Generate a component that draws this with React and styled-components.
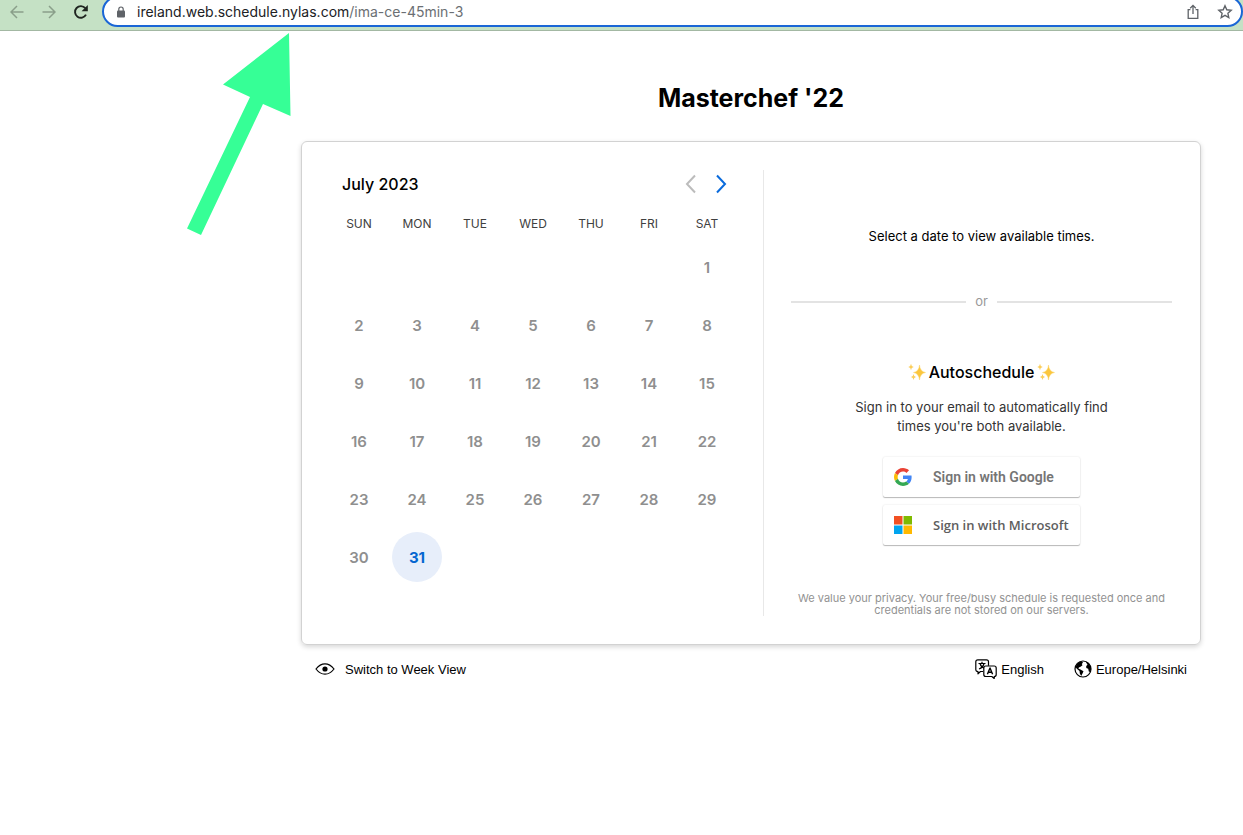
import React from "react";
import styled, { createGlobalStyle } from "styled-components";

const GlobalStyle = createGlobalStyle`
  *, *::before, *::after { box-sizing: border-box; }
  body { margin: 0; background: #fff; color: #000; font-family: Inter, "Liberation Sans", sans-serif; }
  button { border: 0; background: none; padding: 0; margin: 0; cursor: pointer; color: inherit; font: inherit; }
  svg { display: block; flex: none; }
`;

const Page = styled.div`
  position: relative;
  min-height: 100vh;
  overflow-x: hidden;
`;

const BrowserBar = styled.header`
  display: flex;
  align-items: flex-end;
  height: 31px;
  padding-bottom: 3px;
  overflow: hidden;
  background: #c5e1c5;
  border-bottom: 1px solid #a3b8a3;
`;

const NavGroup = styled.nav`
  display: flex;
  width: 102px;
  height: 30px;
  align-items: center;
  padding-left: 1px;
`;

const NavButton = styled.button`
  display: flex;
  width: 32px;
  height: 30px;
  align-items: center;
  justify-content: center;
  color: ${(p) => (p.$dim ? "#8a9f8a" : "#1f2420")};
`;

const AddressBar = styled.div`
  display: flex;
  flex: 1;
  align-items: center;
  height: 31px;
  padding: 0 8px 0 12px;
  background: #fff;
  border: 2px solid #1a66d6;
  border-radius: 16px;
  color: #5f6368;
`;

const Url = styled.div`
  flex: 1;
  margin-left: 11px;
  font-size: 14px;
  line-height: 20px;
  color: #6b6f73;
`;

const Host = styled.span`
  color: #202124;
`;

const BarIcons = styled.div`
  display: flex;
  gap: 16px;
`;

const IconButton = styled.button`
  display: flex;
  width: 16px;
  height: 16px;
  align-items: center;
  justify-content: center;
`;

const Pointer = styled.svg`
  position: absolute;
  left: 187px;
  top: 33px;
`;

const Main = styled.main`
  padding: 50px 42px 0 301px;
`;

const Title = styled.h1`
  margin: 0 0 26px;
  font-size: 25px;
  line-height: 34px;
  font-weight: 700;
  text-align: center;
`;

const Card = styled.section`
  display: flex;
  padding: 28px;
  border: 1px solid #d2d2d2;
  border-radius: 6px;
  box-shadow: 0 2px 5px rgba(0, 0, 0, 0.16);
`;

const CalendarPane = styled.div`
  width: 434px;
  padding-bottom: 30px;
  border-right: 1px solid #e8e8e8;
`;

const MonthBar = styled.div`
  display: flex;
  align-items: center;
  width: 406px;
  height: 28px;
  margin-bottom: 10px;
  padding-left: 12px;
`;

const Month = styled.h2`
  flex: 1;
  margin: 0;
  font-size: 16px;
  line-height: 28px;
  font-weight: 500;
`;

const MonthButton = styled.button`
  display: flex;
  width: 30px;
  height: 28px;
  align-items: center;
  justify-content: center;
  color: ${(p) => (p.disabled ? "#bcbcbc" : "#0a6bdc")};
`;

const Calendar = styled.table`
  width: 406px;
  table-layout: fixed;
  border-collapse: collapse;
  text-align: center;
`;

const Weekday = styled.th`
  height: 30px;
  padding: 0;
  font-size: 12px;
  font-weight: 400;
  color: #404040;
`;

const Cell = styled.td`
  height: 58px;
  padding: 0;
`;

const Day = styled.button`
  width: 50px;
  height: 50px;
  border-radius: 50%;
  font-size: 15px;
  font-weight: ${(p) => (p.$open ? 700 : 600)};
  background: ${(p) => (p.$open ? "#e7eefa" : "transparent")};
  color: ${(p) => (p.$open ? "#0566d0" : "#8f8f8f")};
`;

const TimesPane = styled.div`
  display: flex;
  flex: 1;
  flex-direction: column;
  align-items: center;
  padding: 56px 0 0 27px;
  text-align: center;
`;

const Prompt = styled.p`
  margin: 0 0 45px;
  font-size: 13px;
  line-height: 20px;
`;

const OrRule = styled.div`
  display: flex;
  align-self: stretch;
  align-items: center;
  gap: 9px;
  margin-bottom: 49px;
  font-size: 13px;
  line-height: 20px;
  color: #999;
  &::before, &::after {
    content: "";
    flex: 1;
    height: 2px;
    margin-top: 2px;
    background: #e3e3e3;
  }
`;

const AutoHeading = styled.h3`
  display: flex;
  align-items: center;
  gap: 3px;
  margin: 0 0 14px;
  font-size: 16px;
  line-height: 24px;
  font-weight: 500;
`;

const AutoText = styled.p`
  width: 280px;
  margin: 0 0 21px;
  font-size: 13px;
  line-height: 19px;
  color: #333;
`;

const SignInList = styled.div`
  display: flex;
  flex-direction: column;
  gap: 8px;
  margin-bottom: 40px;
`;

const SignIn = styled.button`
  display: flex;
  align-items: center;
  gap: 21px;
  width: 197px;
  height: 40px;
  padding-left: 11px;
  border-radius: 2px;
  box-shadow: 0 1px 1px rgba(0, 0, 0, 0.26), 0 0 2px rgba(0, 0, 0, 0.12);
  font-family: ${(p) => p.$face}, sans-serif;
  font-size: ${(p) => p.$size}px;
  font-weight: ${(p) => p.$weight};
  color: ${(p) => p.$ink};
`;

const Privacy = styled.p`
  margin: auto 0 0;
  font-size: 11px;
  line-height: 12px;
  color: #929292;
`;

const Footer = styled.footer`
  display: flex;
  align-items: center;
  gap: 30px;
  padding: 12px 14px;
`;

const FooterButton = styled.button`
  display: flex;
  align-items: center;
  gap: ${(p) => (p.$wide ? 10 : 4)}px;
  height: 24px;
  margin-right: ${(p) => (p.$wide ? "auto" : 0)};
  font-family: "Liberation Sans", Arial, sans-serif;
  font-size: 13px;
`;

const BackIcon = ({ flip }) => (
  <svg width="14" height="14" viewBox="0 0 14 14" fill="none" stroke="currentColor" strokeWidth="1.5">
    <path d={flip ? "M0.5 7H13M7 1l6 6-6 6" : "M13.5 7H1M7 1L1 7l6 6"} />
  </svg>
);

const ReloadIcon = () => (
  <svg width="16" height="16" viewBox="0 0 16 16">
    <path d="M13 10.6A5.8 5.8 0 1 1 12.3 4.2" fill="none" stroke="currentColor" strokeWidth="1.9" />
    <path d="M14.8 1v6.2H8.6z" fill="currentColor" />
  </svg>
);

const LockIcon = () => (
  <svg width="10" height="12" viewBox="0 0 10 12">
    <rect x="1" y="4.4" width="8" height="7" rx="1" fill="currentColor" />
    <path d="M2.8 5V3.2a2.2 2.2 0 0 1 4.4 0V5" fill="none" stroke="currentColor" strokeWidth="1.2" />
  </svg>
);

const ShareIcon = () => (
  <svg width="14" height="16" viewBox="0 0 14 16" fill="none" stroke="currentColor" strokeWidth="1.3">
    <path d="M4.4 5.6H2.2v8.8h9.6V5.6H9.6M7 10V1.6M4.2 4.2L7 1.4l2.8 2.8" />
  </svg>
);

const StarIcon = () => (
  <svg width="16" height="16" viewBox="0 0 16 16" fill="none" stroke="currentColor" strokeWidth="1.4">
    <path d="M8 1.8l1.8 4 4.4.5-3.3 3 .9 4.3L8 11.4l-3.8 2.2.9-4.3-3.3-3 4.4-.5z" />
  </svg>
);

const Chevron = ({ next }) => (
  <svg width="12" height="20" viewBox="0 0 12 20" fill="none" stroke="currentColor" strokeWidth="2">
    <path d={next ? "M2 1.5l8 8.5-8 8.5" : "M10 1.5L2 10l8 8.5"} />
  </svg>
);

const Sparkles = () => (
  <svg width="18" height="18" viewBox="0 0 18 18" aria-hidden="true">
    <path d="M11.5 2Q12 8.5 17.5 9.5 12 10.5 11.5 17 11 10.5 5.5 9.5 11 8.5 11.5 2z" fill="#fbc63d" stroke="#fbd56c" strokeWidth=".5" />
    <path d="M3 .8Q3.2 3.6 5.7 4 3.2 4.4 3 7.2 2.8 4.4.3 4 2.8 3.6 3 .8z" fill="#fbce5a" />
    <path d="M5.5 11Q5.7 13.5 8 14 5.7 14.5 5.5 17 5.3 14.5 3 14 5.3 13.5 5.5 11z" fill="#fbce5a" />
  </svg>
);

const GoogleLogo = () => (
  <svg width="18" height="18" viewBox="0 0 48 48">
    <path fill="#EA4335" d="M24 9.5c3.54 0 6.71 1.22 9.21 3.6l6.85-6.85C35.9 2.38 30.47 0 24 0 14.62 0 6.51 5.38 2.56 13.22l7.98 6.19C12.43 13.72 17.74 9.5 24 9.5z" />
    <path fill="#4285F4" d="M46.98 24.55c0-1.57-.15-3.09-.38-4.55H24v9.02h12.94c-.58 2.96-2.26 5.48-4.78 7.18l7.73 6c4.51-4.18 7.09-10.36 7.09-17.65z" />
    <path fill="#FBBC05" d="M10.53 28.59c-.48-1.45-.76-2.99-.76-4.59s.27-3.14.76-4.59l-7.98-6.19C.92 16.46 0 20.12 0 24c0 3.88.92 7.54 2.56 10.78l7.97-6.19z" />
    <path fill="#34A853" d="M24 48c6.48 0 11.93-2.13 15.89-5.81l-7.73-6c-2.15 1.45-4.92 2.3-8.16 2.3-6.26 0-11.57-4.22-13.47-9.91l-7.98 6.19C6.51 42.62 14.62 48 24 48z" />
  </svg>
);

const MicrosoftLogo = () => (
  <svg width="18" height="18" viewBox="0 0 18 18">
    <path fill="#f25022" d="M0 0h8.5v8.5H0z" />
    <path fill="#7fba00" d="M9.5 0H18v8.5H9.5z" />
    <path fill="#00a4ef" d="M0 9.500h8.500V18H0z" />
    <path fill="#ffb900" d="M9.500 9.500H18V18H9.500z" />
  </svg>
);

const EyeIcon = () => (
  <svg width="20" height="12" viewBox="0 0 20 12">
    <path d="M1 6Q5 .8 10 .8T19 6Q15 11.2 10 11.2T1 6z" fill="none" stroke="#000" strokeWidth="1.2" />
    <circle cx="10" cy="6" r="2.6" />
  </svg>
);

const TranslateIcon = () => (
  <svg width="22" height="20" viewBox="0 0 22 20" fill="none" stroke="#000" strokeWidth="1.2" strokeLinejoin="round">
    <path d="M8 12.500H5.500L3 14.800v-2.300Q.8 12.500.8 10.500V2.800Q.8.800 2.800.800h8.700q2 0 2 2v4" />
    <path d="M10.800 7h8.400q2 0 2 2v6.500q0 2-2 2v2L16.800 17.500h-6q-2 0-2-2V9q0-2 2-2z" fill="#fff" />
    <path d="M3.500 4.500h7M7 2.800v1.700M9 4.500Q8 8.500 4 10M5 4.500Q6 8 9 9" />
    <path d="M12.400 15.200L15 9l2.600 6.200M13.300 13.200h3.400" strokeWidth="1.400" />
  </svg>
);

const GlobeIcon = () => (
  <svg width="18" height="18" viewBox="0 0 18 18">
    <circle cx="9" cy="9" r="8" fill="#fff" stroke="#000" strokeWidth="1.2" />
    <path d="M1.500 7Q3 2.500 7.500 1.200L9 2.500 7.800 4 8.500 5.300 6.500 6.800 4.800 7.500 4.500 8.800 6 9.300 9.500 11.300 8.500 13.500 7.200 16 5.800 13.500 5.500 11 2.800 8.800z" />
    <path d="M11.500 1.500L14.500 3 16.800 7 17 9.500 15.800 12 14.800 11.500 14.200 8.800 12.300 8 12.200 6 13.500 4.800z" />
  </svg>
);

const WEEKDAYS = ["SUN", "MON", "TUE", "WED", "THU", "FRI", "SAT"];
const FIRST_WEEKDAY = 6;
const DAYS_IN_MONTH = 31;
const OPEN_DAYS = [31];
const WEEKS = Array.from({ length: 6 }, (_, week) =>
  WEEKDAYS.map((_, i) => {
    const day = week * 7 + i - FIRST_WEEKDAY + 1;
    return day >= 1 && day <= DAYS_IN_MONTH ? day : null;
  })
);

export default function App() {
  return (
    <Page>
      <GlobalStyle />
      <BrowserBar>
        <NavGroup aria-label="Browser">
          <NavButton $dim aria-label="Back"><BackIcon /></NavButton>
          <NavButton $dim aria-label="Forward"><BackIcon flip /></NavButton>
          <NavButton aria-label="Reload"><ReloadIcon /></NavButton>
        </NavGroup>
        <AddressBar>
          <LockIcon />
          <Url><Host>ireland.web.schedule.nylas.com</Host>/ima-ce-45min-3</Url>
          <BarIcons>
            <IconButton aria-label="Share"><ShareIcon /></IconButton>
            <IconButton aria-label="Bookmark"><StarIcon /></IconButton>
          </BarIcons>
        </AddressBar>
      </BrowserBar>
      <Main>
        <Title>Masterchef '22</Title>
        <Card>
          <CalendarPane>
            <MonthBar>
              <Month>July 2023</Month>
              <MonthButton disabled aria-label="Previous month"><Chevron /></MonthButton>
              <MonthButton aria-label="Next month"><Chevron next /></MonthButton>
            </MonthBar>
            <Calendar>
              <thead>
                <tr>{WEEKDAYS.map((d) => <Weekday key={d} scope="col">{d}</Weekday>)}</tr>
              </thead>
              <tbody>
                {WEEKS.map((week, w) => (
                  <tr key={w}>
                    {week.map((day, i) => (
                      <Cell key={i}>
                        {day && (
                          <Day $open={OPEN_DAYS.includes(day)} disabled={!OPEN_DAYS.includes(day)}>{day}</Day>
                        )}
                      </Cell>
                    ))}
                  </tr>
                ))}
              </tbody>
            </Calendar>
          </CalendarPane>
          <TimesPane>
            <Prompt>Select a date to view available times.</Prompt>
            <OrRule>or</OrRule>
            <AutoHeading><Sparkles />Autoschedule<Sparkles /></AutoHeading>
            <AutoText>Sign in to your email to automatically find times you're both available.</AutoText>
            <SignInList>
              <SignIn $face="Roboto" $size={14} $weight={600} $ink="#757575"><GoogleLogo />Sign in with Google</SignIn>
              <SignIn $face={'"Open Sans"'} $size={13} $weight={600} $ink="#5e5e5e"><MicrosoftLogo />Sign in with Microsoft</SignIn>
            </SignInList>
            <Privacy>We value your privacy. Your free/busy schedule is requested once and credentials are not stored on our servers.</Privacy>
          </TimesPane>
        </Card>
        <Footer>
          <FooterButton $wide><EyeIcon />Switch to Week View</FooterButton>
          <FooterButton><TranslateIcon />English</FooterButton>
          <FooterButton><GlobeIcon />Europe/Helsinki</FooterButton>
        </Footer>
      </Main>
      <Pointer width="104" height="203" viewBox="0 0 104 203" aria-hidden="true">
        <path d="M102 0L103.5 83 76 71 14 202 0 195.5 63 64 36 51.5z" fill="#36ff96" />
      </Pointer>
    </Page>
  );
}
